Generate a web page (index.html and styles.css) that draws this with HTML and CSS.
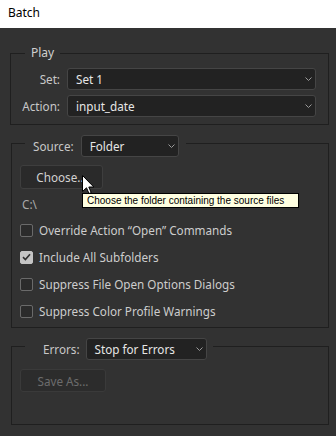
FILE: index.html
```html
<!DOCTYPE html>
<html>
<head>
<meta charset="utf-8">
<link rel="stylesheet" href="styles.css">
</head>
<body>
<div class="titlebar">Batch</div>
<div class="panel">
  <fieldset class="group">
    <legend class="legend-text">Play</legend>
    <div class="form-grid">
      <span class="flabel">Set:</span>
      <div class="select"><span>Set 1</span><svg class="chev" width="7" height="4" viewBox="0 0 7 4"><path d="M0.5 0.5 L3.5 3.5 L6.5 0.5" fill="none" stroke="#9a9a9a" stroke-width="1"/></svg></div>
      <span class="flabel">Action:</span>
      <div class="select"><span>input_date</span><svg class="chev" width="7" height="4" viewBox="0 0 7 4"><path d="M0.5 0.5 L3.5 3.5 L6.5 0.5" fill="none" stroke="#9a9a9a" stroke-width="1"/></svg></div>
    </div>
  </fieldset>

  <fieldset class="group inset">
    <legend class="legend-ctrl source-legend">
      <span class="flabel">Source:</span>
      <div class="select folder"><span>Folder</span><svg class="chev" width="7" height="4" viewBox="0 0 7 4"><path d="M0.5 0.5 L3.5 3.5 L6.5 0.5" fill="none" stroke="#9a9a9a" stroke-width="1"/></svg></div>
    </legend>
    <div class="source-body">
      <div class="btn-wrap">
        <button class="btn choose">Choose...</button>
        <svg class="cursor" width="13" height="20" viewBox="0 0 13 20"><path d="M0.5 0.5 L0.5 16.5 L4.5 12.8 L7 18.5 L9.2 17.6 L6.8 12 L11.8 12 Z" fill="#ffffff" stroke="#000000" stroke-width="1" stroke-linejoin="miter"/></svg>
        <div class="tooltip">Choose the folder containing the source files</div>
      </div>
      <div class="path">C:\</div>
      <ul class="checks">
        <li class="check"><span class="box"></span><span>Override Action “Open” Commands</span></li>
        <li class="check"><span class="box on"><svg width="9" height="8" viewBox="0 0 9 8"><path d="M1 4.2 L3.4 6.5 L8 1.2" fill="none" stroke="#2e2e2e" stroke-width="1.6"/></svg></span><span>Include All Subfolders</span></li>
        <li class="check"><span class="box"></span><span>Suppress File Open Options Dialogs</span></li>
        <li class="check"><span class="box"></span><span>Suppress Color Profile Warnings</span></li>
      </ul>
    </div>
  </fieldset>

  <fieldset class="group inset">
    <legend class="legend-ctrl errors-legend">
      <span class="flabel">Errors:</span>
      <div class="select errsel"><span>Stop for Errors</span><svg class="chev" width="7" height="4" viewBox="0 0 7 4"><path d="M0.5 0.5 L3.5 3.5 L6.5 0.5" fill="none" stroke="#9a9a9a" stroke-width="1"/></svg></div>
    </legend>
    <div class="errors-body">
      <button class="btn saveas" disabled>Save As...</button>
    </div>
  </fieldset>
</div>
</body>
</html>
```
FILE: styles.css
```css
html, body {
  margin: 0;
  padding: 0;
}
body {
  width: 336px;
  height: 436px;
  overflow: hidden;
  background: #323232;
  font-family: "Noto Sans", "Open Sans", sans-serif;
  font-size: 11.7px;
  color: #c8c8c8;
}
.titlebar {
  height: 28px;
  box-sizing: border-box;
  background: #ffffff;
  color: #000000;
  padding-left: 8px;
  line-height: 26px;
  font-size: 12px;
}
.panel {
  padding: 17px 7px 0 10px;
}
.group {
  margin: 0;
  padding: 0;
  border: 1px solid #1f1f1f;
  min-width: 0;
}
.group + .group {
  margin-top: 5px;
}
.group.inset {
  margin-left: 1px;
}
.legend-text {
  margin-left: 14px;
  padding: 0 6px;
  line-height: 16px;
  font-size: 12px;
  color: #cfcfcf;
}
.legend-ctrl {
  margin-left: 13px;
  padding: 5px 7px 0 8px;
  display: flex;
  align-items: center;
  gap: 7px;
}
.errors-legend {
  padding-left: 18px;
  padding-right: 6px;
  gap: 6px;
}
.form-grid {
  display: grid;
  grid-template-columns: 49px 1fr;
  column-gap: 7px;
  row-gap: 5px;
  align-items: center;
  padding: 7px 12px 7px 0;
}
.flabel {
  text-align: right;
  line-height: 16px;
}
.select {
  height: 22px;
  box-sizing: border-box;
  background: #222222;
  border: 1px solid #454545;
  border-radius: 3px;
  display: flex;
  align-items: center;
  justify-content: space-between;
  padding: 0 3px 0 8px;
  color: #e6e6e6;
  line-height: 16px;
}
.chev {
  display: block;
}
.folder {
  width: 98px;
}
.errsel {
  width: 121px;
}
.source-body {
  padding: 8px 8px 7px 8px;
}
.btn-wrap {
  position: relative;
  width: 83px;
  height: 24px;
}
.btn {
  display: block;
  box-sizing: border-box;
  margin: 0;
  padding: 0;
  background: #2a2a2a;
  border: 1px solid #3e3e3e;
  border-radius: 3px;
  color: #d2d2d2;
  font: inherit;
  line-height: 16px;
}
.choose {
  width: 83px;
  height: 24px;
}
.cursor {
  position: absolute;
  left: 62px;
  top: 10px;
}
.tooltip {
  position: absolute;
  left: 62px;
  top: 28px;
  width: 217px;
  height: 15px;
  box-sizing: border-box;
  background: #ffffe1;
  border: 1px solid #000000;
  color: #000000;
  font-family: "Liberation Sans", Arial, sans-serif;
  font-size: 10px;
  line-height: 13px;
  padding-left: 4px;
  white-space: nowrap;
}
.path {
  margin-top: 7px;
  line-height: 16px;
  color: #a9a9a9;
  padding-left: 2px;
}
.checks {
  list-style: none;
  margin: 9px 0 0;
  padding: 0;
  display: flex;
  flex-direction: column;
  gap: 9px;
}
.check {
  display: flex;
  align-items: center;
  gap: 6px;
  height: 18px;
  color: #cdcdcd;
}
.box {
  width: 13px;
  height: 13px;
  box-sizing: border-box;
  border: 1px solid #6a6a6a;
  border-radius: 2px;
  background: #2b2b2b;
  display: flex;
  align-items: center;
  justify-content: center;
}
.box.on {
  background: #c4c4c4;
  border-color: #c4c4c4;
}
.errors-body {
  padding: 9px 8px 32px 8px;
}
.saveas {
  width: 86px;
  height: 23px;
  background: #2c2c2c;
  border-color: #3a3a3a;
  color: #6c6c6c;
}
```
